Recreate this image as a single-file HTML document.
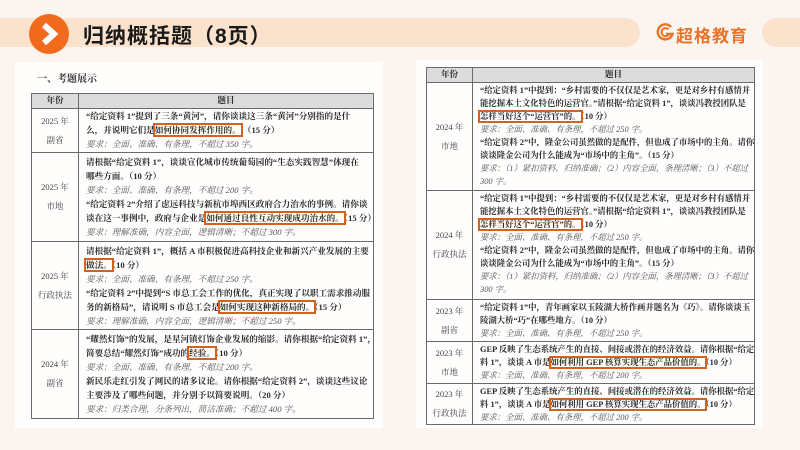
<!DOCTYPE html>
<html><head><meta charset="utf-8"><style>
*{margin:0;padding:0;box-sizing:border-box}
html,body{width:800px;height:450px;overflow:hidden}
body{background:#fcf5ef;font-family:"Liberation Serif","Noto Serif CJK SC",serif;position:relative}
.band{position:absolute;left:0;top:18px;width:640px;height:29px;background:#fbe2cd;border-radius:0 15px 15px 0}
.band2{position:absolute;left:762px;top:18px;width:60px;height:29px;background:#fbe2cd;border-radius:15px}
.circ{position:absolute;left:29px;top:14px;width:40px;height:40px;border-radius:50%;background:#f26b1d}
.title{position:absolute;left:83px;top:20px;font:bold 21px "Liberation Sans","Noto Sans CJK SC",sans-serif;color:#1a1a1a;letter-spacing:1px}
.logo{position:absolute;left:676px;top:22px;font:bold 17px "Liberation Sans","Noto Sans CJK SC",sans-serif;color:#e8742a;letter-spacing:1px}
.card{position:absolute;background:#fffefd}
table{position:absolute;border-collapse:collapse;table-layout:fixed;font-size:8.6px;color:#2a2a2a}
td,th{border:1px solid #6b6b6b;padding:0 0 0 7px;vertical-align:top;line-height:14px;overflow:hidden}
th{background:#dcdcdc;font-weight:bold;text-align:center;padding:0;height:15px;line-height:13px;font-size:8.5px}
td.y{text-align:center;vertical-align:middle;padding:0;color:#444;line-height:19px;white-space:nowrap;font-size:8.5px}
td div{white-space:nowrap;font-weight:bold;letter-spacing:0;height:14px}
td div.r{font-weight:normal;color:#555;font-style:italic}
.rt{font-size:8.4px}
.rt td div{height:13px;line-height:13px}
.b{outline:2px solid #d4621e;outline-offset:0px}
.h{position:absolute;left:37px;top:70px;font-size:10px;font-weight:bold;color:#333}
</style></head><body>
<div class="band"></div><div class="band2"></div>
<div class="circ"><svg width="40" height="40" viewBox="0 0 40 40"><path d="M15 11 L25 20 L15 29" fill="none" stroke="#fff" stroke-width="6" stroke-linejoin="miter"/></svg></div>
<div class="title">归纳概括题（8页）</div>
<svg style="position:absolute;left:656px;top:23px" width="19" height="19" viewBox="0 0 19 19"><path d="M15 4 A7.5 7.5 0 1 0 16.5 11 L10 11" fill="none" stroke="#e8742a" stroke-width="2.5"/><path d="M12.5 6.5 A4 4 0 1 0 13 11" fill="none" stroke="#e8742a" stroke-width="2"/></svg>
<div class="logo">超格教育</div>

<div class="card" style="left:15px;top:62px;width:368px;height:366px"></div>
<div class="card" style="left:416px;top:60px;width:347px;height:368px"></div>
<div class="h">一、考题展示</div>

<table style="left:31px;top:93px;width:342px">
<colgroup><col style="width:47px"><col style="width:295px"></colgroup>
<tr><th>年份</th><th>题目</th></tr>
<tr style="height:44px"><td class="y">2025 年<br>副省</td><td><div>“给定资料 1”提到了三条“黄河”，请你谈谈这三条“黄河”分别指的是什</div><div>么，并说明它们是<span class="b">如何协同发挥作用的。</span> （15 分）</div><div class="r">要求：全面、准确、有条理，不超过 350 字。</div></td></tr>
<tr style="height:89px"><td class="y">2025 年<br>市地</td><td style="padding-top:2px"><div>请根据“给定资料 1”，谈谈宣化城市传统葡萄园的“生态实践智慧”体现在</div><div>哪些方面。（10 分）</div><div class="r">要求：全面、准确、有条理，不超过 200 字。</div><div>“给定资料 2”介绍了虑远科技与新杭市埠西区政府合力治水的事例。请你谈</div><div>谈在这一事例中，政府与企业是<span class="b">如何通过良性互动实现成功治水的。</span>（15 分）</div><div class="r">要求：理解准确，内容全面，逻辑清晰；不超过 300 字。</div></td></tr>
<tr style="height:88px"><td class="y">2025 年<br>行政执法</td><td style="padding-top:2px"><div>请根据“给定资料 1”，概括 A 市积极促进高科技企业和新兴产业发展的主要</div><div><span class="b">做法。</span>（10 分）</div><div class="r">要求：全面、准确、有条理，不超过 250 字。</div><div>“给定资料 2”中提到“S 市总工会工作的优化，真正实现了以职工需求推动服</div><div>务的新格局”，请说明 S 市总工会是<span class="b">如何实现这种新格局的。</span>（15 分）</div><div class="r">要求：理解准确，内容全面，逻辑清晰；不超过 250 字。</div></td></tr>
<tr style="height:89px"><td class="y">2024 年<br>副省</td><td style="padding-top:2px"><div>“耀然灯饰”的发展，是星河镇灯饰企业发展的缩影。请你根据“给定资料 1”，</div><div>简要总结“耀然灯饰”成功的<span class="b">经验。</span>（10 分）</div><div class="r">要求：全面、准确、有条理，不超过 200 字。</div><div>新民乐走红引发了网民的诸多议论。请你根据“给定资料 2”，谈谈这些议论</div><div>主要涉及了哪些问题，并分别予以简要说明。（20 分）</div><div class="r">要求：归类合理，分条列出，简洁准确；不超过 400 字。</div></td></tr>
</table>

<table class="rt" style="left:426px;top:67px;width:328px">
<colgroup><col style="width:46px"><col style="width:282px"></colgroup>
<tr><th>年份</th><th>题目</th></tr>
<tr style="height:108px"><td class="y">2024 年<br>市地</td><td style="padding-top:1px"><div>“给定资料 1”中提到：“乡村需要的不仅仅是艺术家，更是对乡村有感情并</div><div>能挖掘本土文化特色的运营官。”请根据“给定资料 1”，谈谈冯教授团队是</div><div><span class="b">怎样当好这个“运营官”的。</span>（10 分）</div><div class="r">要求：全面、准确、有条理，不超过 250 字。</div><div>“给定资料 2”中，隆金公司虽然做的是配件，但也成了市场中的主角。请你</div><div>谈谈隆金公司为什么能成为“市场中的主角”。（15 分）</div><div class="r">要求：（1）紧扣资料，归纳准确；（2）内容全面，条理清晰；（3）不超过</div><div class="r">300 字。</div></td></tr>
<tr style="height:109px"><td class="y">2024 年<br>行政执法</td><td style="padding-top:1px"><div>“给定资料 1”中提到：“乡村需要的不仅仅是艺术家，更是对乡村有感情并</div><div>能挖掘本土文化特色的运营官。”请根据“给定资料 1”，谈谈冯教授团队是</div><div><span class="b">怎样当好这个“运营官”的。</span>（10 分）</div><div class="r">要求：全面、准确、有条理，不超过 250 字。</div><div>“给定资料 2”中，隆金公司虽然做的是配件，但也成了市场中的主角。请你</div><div>谈谈隆金公司为什么能成为“市场中的主角”。（15 分）</div><div class="r">要求：（1）紧扣资料，归纳准确；（2）内容全面，条理清晰；（3）不超过</div><div class="r">300 字。</div></td></tr>
<tr style="height:42px"><td class="y">2023 年<br>副省</td><td style="padding-top:1px"><div>“给定资料 1”中，青年画家以玉陵湖大桥作画并题名为《巧》。请你谈谈玉</div><div>陵湖大桥“巧”在哪些地方。（10 分）</div><div class="r">要求：全面、准确、有条理，不超过 250 字。</div></td></tr>
<tr style="height:42px"><td class="y">2023 年<br>市地</td><td style="padding-top:1px"><div>GEP 反映了生态系统产生的直接、间接或潜在的经济效益。请你根据“给定资</div><div>料 1”，谈谈 A 市是<span class="b">如何利用 GEP 核算实现生态产品价值的。</span>（10 分）</div><div class="r">要求：全面、准确、有条理，不超过 200 字。</div></td></tr>
<tr style="height:41px"><td class="y">2023 年<br>行政执法</td><td style="padding-top:1px"><div>GEP 反映了生态系统产生的直接、间接或潜在的经济效益。请你根据“给定资</div><div>料 1”，谈谈 A 市是<span class="b">如何利用 GEP 核算实现生态产品价值的。</span>（10 分）</div><div class="r">要求：全面、准确、有条理，不超过 200 字。</div></td></tr>
</table>
</body></html>
